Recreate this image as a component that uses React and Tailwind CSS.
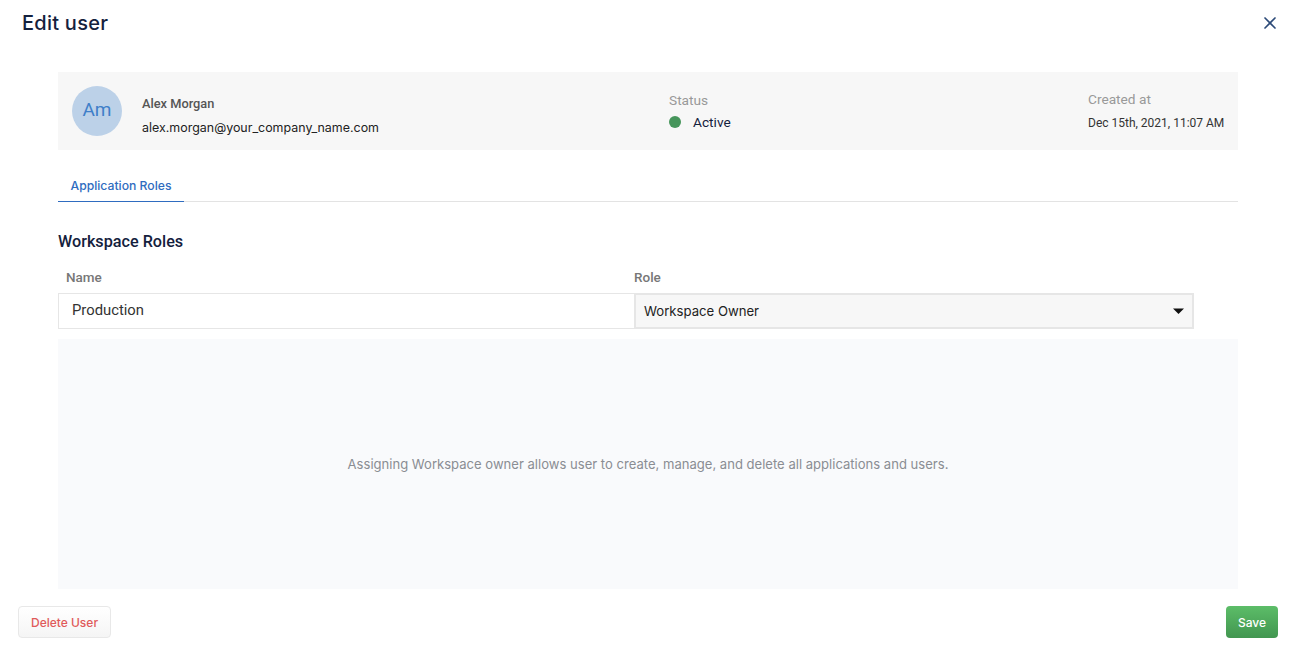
import { X } from "lucide-react";

export default function App() {
  return (
    <div className="flex h-[653px] flex-col bg-white font-['Roboto',sans-serif] overflow-hidden">
      {/* HEADER */}
      <div className="flex h-[72px] items-start justify-between pl-[22px] pr-[12px] pt-[10px]">
        <h1 className="text-[20px] leading-[26px] font-medium tracking-[0.25px] text-[#14213d] font-['Inter',sans-serif]">
          Edit user
        </h1>
        <button className="mt-[3px] text-[#2c4a78]">
          <X size={20} strokeWidth={2} />
        </button>
      </div>

      <div className="ml-[58px] flex w-[1180px] flex-col">
        {/* USER SUMMARY */}
        <div className="flex h-[78px] items-center bg-[#f7f7f7] px-[14px]">
          <div className="flex h-[50px] w-[50px] shrink-0 items-center justify-center rounded-full bg-[#bcd1e8] pb-[1px] text-[19px] text-[#3f7fc9]">
            Am
          </div>
          <div className="ml-[20px] w-[527px] shrink-0 pt-[9px]">
            <p className="text-[12.8px] leading-[16px] font-medium text-[#555555]">Alex Morgan</p>
            <p className="mt-[8px] text-[12.45px] leading-[16px] text-[#222222] font-['Inter',sans-serif]">
              alex.morgan@your_company_name.com
            </p>
          </div>
          <div className="w-[419px] shrink-0">
            <p className="text-[13.7px] leading-[16px] text-[#999999]">Status</p>
            <div className="mt-[6px] flex items-center">
              <span className="h-[12px] w-[12px] rounded-full bg-[#46955b]" />
              <span className="ml-[12px] text-[13.7px] leading-[16px] text-[#14213d]">Active</span>
            </div>
          </div>
          <div className="ml-auto whitespace-nowrap">
            <p className="-mt-px text-[13.7px] leading-[16px] text-[#999999]">Created at</p>
            <p className="mt-[8px] text-[12px] leading-[16px] text-[#333333]">
              Dec 15th, 2021, 11:07 AM
            </p>
          </div>
        </div>

        {/* TABS */}
        <div className="mt-[22px] flex h-[30px] border-b border-[#e3e3e3]">
          <div className="-mb-px flex w-[126px] items-center justify-center border-b border-[#2f6cc0] text-[12.2px] font-medium text-[#2f6cc0] font-['Inter',sans-serif]">
            Application Roles
          </div>
        </div>

        <h2 className="mt-[30px] text-[16.2px] leading-[20px] font-medium text-[#14213d]">
          Workspace Roles
        </h2>

        {/* ROLES TABLE */}
        <div className="mt-[15px] flex h-[20px] items-center text-[13.5px] font-medium text-[#777777]">
          <span className="w-[576px] pl-[8px]">Name</span>
          <span>Role</span>
        </div>
        <div className="mt-[6px] flex h-[36px]">
          <div className="flex w-[576px] items-center border border-r-0 border-[#e6e6e6] pb-[2px] pl-[13px] text-[14.8px] text-[#333333]">
            Production
          </div>
          <div className="flex w-[560px] items-center justify-between border-2 border-[#e6e6e6] bg-[#f7f7f7] pl-[8px] pr-[8px] text-[13.15px] text-[#222222] font-['Inter',sans-serif]">
            <span className="pt-[2px]">Workspace Owner</span>
            <svg width="11" height="6" viewBox="0 0 11 6">
              <path d="M0 0.5h11L5.5 6z" fill="#111111" />
            </svg>
          </div>
        </div>

        {/* ROLE DESCRIPTION */}
        <div className="mt-[10px] flex h-[250px] items-center justify-center bg-[#f9fafc] pt-[2px] text-[13.07px] text-[#8a8d93] font-['Inter',sans-serif]">
          Assigning Workspace owner allows user to create, manage, and delete all applications and users.
        </div>
      </div>

      {/* FOOTER */}
      <div className="mt-[17px] flex items-start justify-between pl-[18px] pr-[14px]">
        <button className="h-[32px] w-[93px] rounded-[4px] border border-[#e8e8e8] bg-gradient-to-b from-white to-[#f5f5f5] pt-[2px] text-[12px] font-medium text-[#e05a5a] font-['Inter',sans-serif]">
          Delete User
        </button>
        <button className="h-[32px] w-[52px] rounded-[4px] bg-gradient-to-b from-[#5cbd68] to-[#429650] pt-[2px] text-[12px] font-medium text-white font-['Inter',sans-serif]">
          Save
        </button>
      </div>
    </div>
  );
}
